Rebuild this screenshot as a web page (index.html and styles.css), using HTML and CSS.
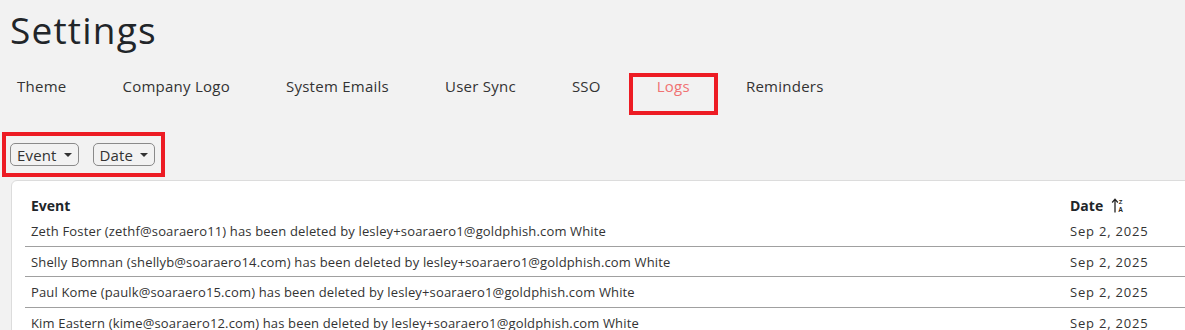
FILE: index.html
```html
<!DOCTYPE html>
<html lang="en">
<head>
    <meta charset="UTF-8">
    <meta name="viewport" content="width=device-width, initial-scale=1.0">
    <title>Settings</title>
    <link rel="stylesheet" href="styles.css">
</head>
<body>

    <h1 class="page-title">Settings</h1>

    <!-- Abas de configuracao -->
    <nav class="tabs">
        <a class="tab">Theme</a>
        <a class="tab">Company Logo</a>
        <a class="tab">System Emails</a>
        <a class="tab">User Sync</a>
        <a class="tab">SSO</a>
        <a class="tab active">Logs</a>
        <a class="tab">Reminders</a>
    </nav>

    <!-- Filtros -->
    <div class="filters">
        <button class="filter-btn">Event <span class="caret"></span></button>
        <button class="filter-btn">Date <span class="caret"></span></button>
    </div>

    <!-- Tabela de logs -->
    <div class="card">
        <table class="logs">
            <thead>
                <tr>
                    <th class="col-event">Event</th>
                    <th class="col-date">Date
                        <svg class="sort-icon" width="14" height="15" viewBox="0 0 14 15">
                            <path d="M4 14.5V1.5M1.2 4.5L4 1.2l2.8 3.3" fill="none" stroke="#222" stroke-width="1.3"/>
                            <text x="9.5" y="6" font-size="6" font-family="Liberation Sans, sans-serif" text-anchor="middle" fill="#222">Z</text>
                            <text x="9.5" y="14" font-size="6.5" font-family="Liberation Sans, sans-serif" text-anchor="middle" fill="#222">A</text>
                        </svg>
                    </th>
                </tr>
            </thead>
            <tbody>
                <tr>
                    <td>Zeth Foster (zethf@soaraero11) has been deleted by lesley+soaraero1@goldphish.com White</td>
                    <td class="date">Sep 2, 2025</td>
                </tr>
                <tr>
                    <td>Shelly Bomnan (shellyb@soaraero14.com) has been deleted by lesley+soaraero1@goldphish.com White</td>
                    <td class="date">Sep 2, 2025</td>
                </tr>
                <tr>
                    <td>Paul Kome (paulk@soaraero15.com) has been deleted by lesley+soaraero1@goldphish.com White</td>
                    <td class="date">Sep 2, 2025</td>
                </tr>
                <tr>
                    <td>Kim Eastern (kime@soaraero12.com) has been deleted by lesley+soaraero1@goldphish.com White</td>
                    <td class="date">Sep 2, 2025</td>
                </tr>
            </tbody>
        </table>
    </div>

</body>
</html>
```
FILE: styles.css
```css
body {
    font-family: 'Open Sans', sans-serif;
    background-color: #f2f2f2;
    color: #333;
    margin: 0;
    padding: 0;
    overflow: hidden;
}

.page-title {
    margin: 0;
    padding: 8px 0 0 10px;
    font-size: 37px;
    font-weight: 400;
    line-height: 44px;
    letter-spacing: 1.2px;
    color: #212529;
}

/* Abas */
.tabs {
    display: flex;
    margin: 21px 0 0 -11px;
}

.tab {
    font-size: 15px;
    line-height: 20px;
    letter-spacing: 0.25px;
    padding: 3px 28px 19px 28px;
    color: #333;
    cursor: pointer;
}

.tab.active {
    color: #f07373;
    outline: 4px solid #ed1c24;
    outline-offset: -4px;
}

/* Filtros */
.filters {
    display: inline-flex;
    gap: 14px;
    margin: 17px 0 0 2px;
    padding: 7px 6px 7px 4px;
    border: 4px solid #ed1c24;
}

.filter-btn {
    display: flex;
    align-items: center;
    gap: 7px;
    height: 23px;
    padding: 0 6px;
    font-family: 'Open Sans', sans-serif;
    font-size: 15px;
    letter-spacing: 0.15px;
    color: #333;
    background-color: #f2f2f2;
    border: 1px solid #8a8a8a;
    border-radius: 5px;
    cursor: pointer;
}

.caret {
    width: 0;
    height: 0;
    border-top: 4px solid #333;
    border-left: 4px solid transparent;
    border-right: 4px solid transparent;
}

/* Card da tabela */
.card {
    width: 1200px;
    margin: 3px 0 0 11px;
    padding: 12px 13px 0 13px;
    background-color: #fff;
    border: 1px solid #dcdcdc;
    border-radius: 6px 0 0 0;
}

.logs {
    border-collapse: collapse;
    table-layout: fixed;
    width: 1180px;
    font-size: 13px;
}

.logs th {
    text-align: left;
    font-size: 14px;
    font-weight: 700;
    line-height: 20px;
    height: 20px;
    padding: 3px 6px 0 6px;
    color: #212529;
    white-space: nowrap;
}

.col-event {
    width: 1027px;
}

.sort-icon {
    vertical-align: -2px;
    margin-left: 4px;
}

.logs td {
    line-height: 20px;
    padding: 5px 6px 4.5px 6px;
    letter-spacing: 0.15px;
    white-space: nowrap;
}

.logs td.date {
    letter-spacing: 0.8px;
}

.logs tbody tr {
    border-bottom: 1px solid #a0a0a0;
}
```
